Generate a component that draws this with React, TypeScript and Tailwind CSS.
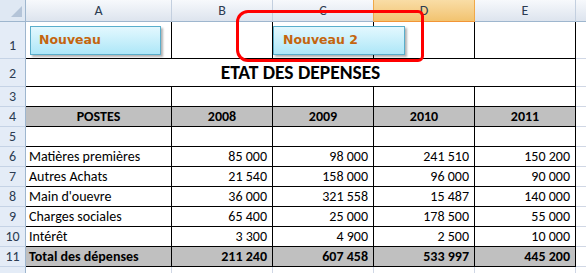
import React from "react";

const colW = ["w-[146px]", "w-[101px]", "w-[101px]", "w-[101px]", "w-[101px]"];
const letters = ["A", "B", "C", "D", "E"];

type Row = { n: number; cells: string[]; kind?: "head" | "total" };

const rows: Row[] = [
  { n: 3, cells: ["", "", "", "", ""] },
  { n: 4, cells: ["POSTES", "2008", "2009", "2010", "2011"], kind: "head" },
  { n: 5, cells: ["", "", "", "", ""] },
  { n: 6, cells: ["Matières premières", "85 000", "98 000", "241 510", "150 200"] },
  { n: 7, cells: ["Autres Achats", "21 540", "158 000", "96 000", "90 000"] },
  { n: 8, cells: ["Main d'ouevre", "36 000", "321 558", "15 487", "140 000"] },
  { n: 9, cells: ["Charges sociales", "65 400", "25 000", "178 500", "55 000"] },
  { n: 10, cells: ["Intérêt", "3 300", "4 900", "2 500", "10 000"] },
  { n: 11, cells: ["Total des dépenses", "211 240", "607 458", "533 997", "445 200"], kind: "total" },
];

function RowHead({ n }: { n?: number }) {
  return (
    <div className="w-[26px] shrink-0 flex items-end justify-center border-r border-b border-r-[#9eb6ce] border-b-[#c5d3e6] bg-[#e4ecf7] text-[14px] leading-[18px] text-[#2c3c52]">
      {n}
    </div>
  );
}

function Filler() {
  return <div className="flex-1 border-b border-[#d0d7e5]" />;
}

export default function App() {
  return (
    <div className="relative w-[586px] h-[273px] overflow-hidden bg-white font-['Carlito','Lato',sans-serif] text-black">
      {/* column headers */}
      <div className="flex h-[22px]">
        <div className="relative w-[26px] shrink-0 border-r border-b border-[#9eb6ce] bg-[#dfe8f3]">
          <svg className="absolute right-[3px] bottom-[4px]" width="11" height="11" viewBox="0 0 11 11">
            <polygon points="11,0 11,11 0,11" fill="#b4c4d8" />
          </svg>
        </div>
        {letters.map((l, i) => (
          <div
            key={l}
            className={`${colW[i]} shrink-0 flex items-center justify-center border-r border-b text-[14px] text-[#2c3c52] bg-linear-to-b ${
              l === "D"
                ? "from-[#f9dda6] to-[#f2c36f] border-r-[#f0a848] border-b-[#f29536]"
                : l === "C"
                ? "from-[#f7f9fc] to-[#dde4ee] border-r-[#f0a848] border-b-[#9eb6ce]"
                : "from-[#f7f9fc] to-[#dde4ee] border-r-[#c3cfdf] border-b-[#9eb6ce]"
            }`}
          >
            {l}
          </div>
        ))}
        <div className="flex-1 border-b border-[#9eb6ce] bg-linear-to-b from-[#f7f9fc] to-[#dde4ee]" />
      </div>

      {/* row 1 */}
      <div className="flex h-[37px]">
        <div className="w-[26px] shrink-0 flex items-end justify-center pb-[3px] border-r border-b border-r-[#9eb6ce] border-b-[#c5d3e6] bg-[#e4ecf7] text-[14px] leading-[18px] text-[#2c3c52]">
          1
        </div>
        {colW.map((w, i) => (
          <div key={i} className={`${w} shrink-0 border-r border-b border-black`} />
        ))}
        <Filler />
      </div>

      {/* row 2 */}
      <div className="flex h-[28px]">
        <div className="w-[26px] shrink-0 flex items-end justify-center pb-[3px] border-r border-b border-r-[#9eb6ce] border-b-[#c5d3e6] bg-[#e4ecf7] text-[14px] leading-[18px] text-[#2c3c52]">
          2
        </div>
        <div className="w-[550px] shrink-0 flex items-center justify-center border-r border-b border-black text-[19.5px] font-bold">
          ETAT DES DEPENSES
        </div>
        <Filler />
      </div>

      {rows.map((r) => (
        <div key={r.n} className="flex h-[20px]">
          <RowHead n={r.n} />
          {r.cells.map((c, i) => (
            <div
              key={i}
              className={`${colW[i]} shrink-0 flex items-end px-[5px] border-r border-b border-black text-[14px] leading-[18px] ${
                r.kind === "head"
                  ? "justify-center font-bold bg-[#c0c0c0]"
                  : r.kind === "total"
                  ? `font-bold bg-[#c0c0c0] ${i === 0 ? "justify-start pl-[3px]" : "justify-end"}`
                  : i === 0
                  ? "justify-start pl-[3px]"
                  : "justify-end"
              }`}
            >
              {c}
            </div>
          ))}
          <Filler />
        </div>
      ))}

      {/* row 12 */}
      <div className="flex h-[20px]">
        <RowHead />
        {colW.map((w, i) => (
          <div key={i} className={`${w} shrink-0 border-r border-b border-[#d0d7e5]`} />
        ))}
        <Filler />
      </div>

      {/* floating buttons */}
      <button className="absolute left-[30px] top-[26px] w-[131px] h-[29px] flex items-center pl-[8px] border border-[#5aaecb] bg-linear-to-b from-[#e3f8fe] to-[#ade7f8] shadow-[2px_2px_2px_rgba(0,0,0,0.3)] font-['DejaVu_Sans',sans-serif] text-[12.5px] font-bold text-[#c4650f]">
        Nouveau
      </button>
      <button className="absolute left-[273px] top-[26px] w-[132px] h-[29px] flex items-center pl-[9px] border border-[#5aaecb] bg-linear-to-b from-[#e3f8fe] to-[#ade7f8] shadow-[2px_2px_2px_rgba(0,0,0,0.3)] font-['DejaVu_Sans',sans-serif] text-[12.5px] font-bold text-[#c4650f]">
        Nouveau 2
      </button>

      {/* red highlight */}
      <div className="pointer-events-none absolute left-[236px] top-[10px] w-[188px] h-[52px] border-[3px] border-[#ff0000] rounded-l-[12px] rounded-r-[6px]" />
    </div>
  );
}
